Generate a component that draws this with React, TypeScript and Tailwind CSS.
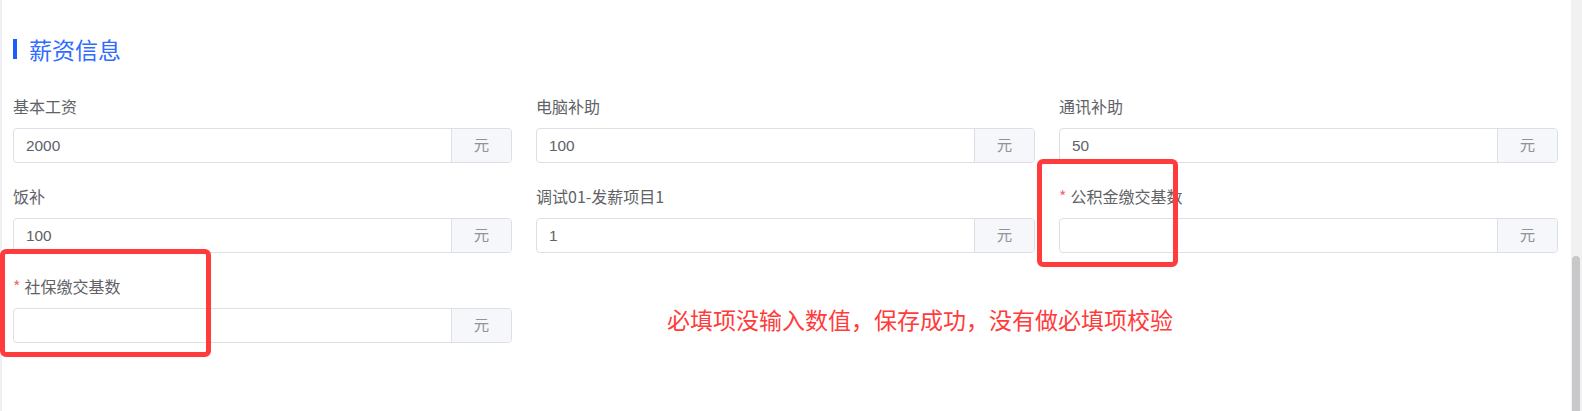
import React from 'react';

interface Field {
  label: string;
  value: string;
  required?: boolean;
}

const fields: Field[] = [
  { label: '基本工资', value: '2000' },
  { label: '电脑补助', value: '100' },
  { label: '通讯补助', value: '50' },
  { label: '饭补', value: '100' },
  { label: '调试01-发薪项目1', value: '1' },
  { label: '公积金缴交基数', value: '', required: true },
  { label: '社保缴交基数', value: '', required: true },
];

const font = { fontFamily: '"Liberation Sans", Arial, "Noto Sans CJK SC", sans-serif' };
const cjk = { fontFamily: '"Noto Sans CJK SC", sans-serif' };

const MoneyField = ({ field }: { field: Field }) => (
  <div className="flex flex-col">
    <div className="flex h-[22px] items-center text-[16px] text-[#606266]" style={cjk}>
      {field.required && <span className="mr-[4px] text-[#f56c6c]">*</span>}
      <span>{field.label}</span>
    </div>
    <div className="mt-[11px] flex h-[35px] overflow-hidden rounded-[4px] border border-[#dcdfe6] bg-white">
      <div className="flex flex-1 items-center px-[12px] text-[15.4px] text-[#606266]">{field.value}</div>
      <div className="flex w-[60px] items-center justify-center border-l border-[#dcdfe6] bg-[#f5f7fa] text-[15.4px] text-[#909399]">
        元
      </div>
    </div>
  </div>
);

export default function App() {
  return (
    <div className="relative flex h-[411px] w-[1582px] overflow-hidden bg-white" style={font}>
      <div className="flex-1 border-l-2 border-[#f0f0f2] pl-[11px] pr-[13px] pt-[39px]">
        <div className="flex h-[20px] items-center gap-[12px]">
          <div className="h-[20px] w-[4px] bg-[#1d5cff]" />
          <span className="text-[23px] leading-[20px] text-[#2f6bff]" style={cjk}>薪资信息</span>
        </div>
        <div className="mt-[36px] grid grid-cols-3 gap-x-[24px] gap-y-[22px]">
          {fields.map((f) => (
            <MoneyField key={f.label} field={f} />
          ))}
        </div>
      </div>

      <div className="flex w-[11px] flex-col bg-[#f1f1f1]">
        <div className="ml-[1px] mt-[256px] w-[8px] flex-1 rounded-t-[4px] bg-[#c8c8cb]" />
      </div>

      {/* annotations */}
      <div className="absolute left-[1037px] top-[159px] h-[108px] w-[141px] rounded-[6px] border-[5px] border-[#ff3b3b]" />
      <div className="absolute left-0 top-[249px] h-[108px] w-[211px] rounded-[6px] border-[5px] border-[#ff3b3b]" />
      <div className="absolute left-[667px] top-[306px] text-[23px] leading-[26px] text-[#ff3b3b]" style={cjk}>
        必填项没输入数值，保存成功，没有做必填项校验
      </div>
    </div>
  );
}
